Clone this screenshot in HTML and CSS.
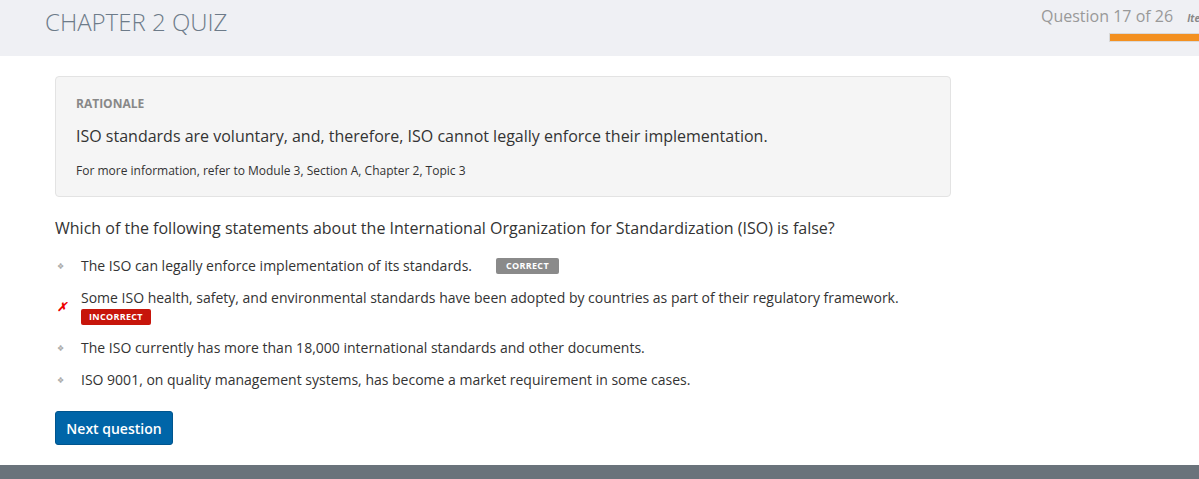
FILE: index.html
```html
<!DOCTYPE html>
<html>
<head>
<meta charset="utf-8">
<link rel="stylesheet" href="styles.css">
</head>
<body>
<header class="top">
  <h1 class="title">CHAPTER 2 QUIZ</h1>
  <div class="progress">
    <div class="progress-row">
      <span class="count">Question 17 of 26</span>
      <span class="item">Item</span>
    </div>
    <div class="bar"><div class="bar-fill"></div></div>
  </div>
</header>
<main class="content">
  <section class="rationale">
    <div class="rat-label">RATIONALE</div>
    <p class="rat-text">ISO standards are voluntary, and, therefore, ISO cannot legally enforce their implementation.</p>
    <p class="rat-ref">For more information, refer to Module 3, Section A, Chapter 2, Topic 3</p>
  </section>
  <p class="question">Which of the following statements about the International Organization for Standardization (ISO) is false?</p>
  <ul class="options">
    <li class="opt"><span class="mark dot">&#x2756;</span><div class="opt-body"><span>The ISO can legally enforce implementation of its standards.</span><span class="badge correct">CORRECT</span></div></li>
    <li class="opt wrong"><span class="mark x">&#x2717;</span><div class="opt-body col"><span>Some ISO health, safety, and environmental standards have been adopted by countries as part of their regulatory framework.</span><span class="badge incorrect">INCORRECT</span></div></li>
    <li class="opt"><span class="mark dot">&#x2756;</span><div class="opt-body"><span>The ISO currently has more than 18,000 international standards and other documents.</span></div></li>
    <li class="opt"><span class="mark dot">&#x2756;</span><div class="opt-body"><span>ISO 9001, on quality management systems, has become a market requirement in some cases.</span></div></li>
  </ul>
  <button class="next">Next question</button>
</main>
<footer class="foot"></footer>
</body>
</html>
```
FILE: styles.css
```css
* { box-sizing: border-box; }
html, body { margin: 0; padding: 0; }
body {
  font-family: "Open Sans", "Liberation Sans", sans-serif;
  color: #333;
  background: #fff;
  width: 1199px;
  height: 479px;
  overflow: hidden;
  display: flex;
  flex-direction: column;
}
.top {
  height: 56px;
  background: #eff0f4;
  display: flex;
  justify-content: space-between;
  align-items: flex-start;
  padding-left: 45px;
  flex-shrink: 0;
}
.title {
  margin: 5px 0 0 0;
  font-size: 24px;
  font-weight: 300;
  color: #6d7b89;
  letter-spacing: 0;
  line-height: 34px;
}
.progress {
  width: 158px;
  padding-top: 5px;
  display: flex;
  flex-direction: column;
  align-items: flex-end;
  overflow: hidden;
}
.progress-row {
  display: flex;
  align-items: baseline;
  white-space: nowrap;
  width: 158px;
}
.count {
  font-size: 16px;
  color: #999;
  line-height: 22px;
}
.item {
  font-size: 10px;
  font-style: italic;
  font-weight: 700;
  color: #888;
  margin-left: 14px;
}
.bar {
  margin-top: 6px;
  width: 90px;
  height: 9px;
  border: 1px solid #d9d9d9;
  border-right: 0;
  align-self: flex-end;
}
.bar-fill {
  height: 100%;
  background: #f39020;
}
.content {
  flex: 1;
  padding: 20px 0 0 55px;
}
.rationale {
  width: 896px;
  background: #f5f5f5;
  border: 1px solid #e3e3e3;
  border-radius: 4px;
  padding: 19px 19px 17px 20px;
}
.rat-label {
  font-size: 12px;
  font-weight: 700;
  color: #888;
  line-height: 16px;
}
.rat-text {
  margin: 13px 0 0 0;
  font-size: 16px;
  line-height: 22px;
  color: #333;
}
.rat-ref {
  margin: 16px 0 0 0;
  font-size: 12px;
  line-height: 16px;
  color: #333;
}
.question {
  margin: 20px 0 0 0;
  font-size: 16px;
  line-height: 22px;
  color: #333;
}
.options {
  list-style: none;
  margin: 17px 0 0 0;
  padding: 0;
  display: flex;
  flex-direction: column;
  gap: 12px;
}
.opt {
  display: flex;
  align-items: flex-start;
  font-size: 14px;
  line-height: 20px;
}
.wrong { align-items: center; padding-bottom: 1px; }
.mark {
  width: 26px;
  flex-shrink: 0;
  padding-left: 2px;
}
.dot {
  font-size: 8px;
  color: #aaa;
  line-height: 20px;
}
.x {
  font-size: 12px;
  color: #e00;
  font-weight: 700;
  font-style: italic;
}
.opt-body {
  display: flex;
  align-items: center;
  gap: 24px;
}
.opt-body.col {
  flex-direction: column;
  align-items: flex-start;
  gap: 1px;
}
.badge {
  font-size: 9px;
  font-weight: 700;
  letter-spacing: 0.3px;
  color: #fff;
  padding: 0 10px;
  line-height: 16px;
  border-radius: 2px;
}
.correct { background: #8a8a8a; }
.incorrect { background: #c7150b; padding: 0 8px; }
.next {
  margin-top: 21px;
  width: 118px;
  height: 34px;
  background: #0065a8;
  color: #fff;
  border: 1px solid #00558e;
  border-radius: 3px;
  font-family: "Open Sans", "Liberation Sans", sans-serif;
  font-size: 14px;
  font-weight: 600;
  padding: 0;
}
.foot {
  height: 14px;
  background: #6a737b;
  flex-shrink: 0;
}
```
